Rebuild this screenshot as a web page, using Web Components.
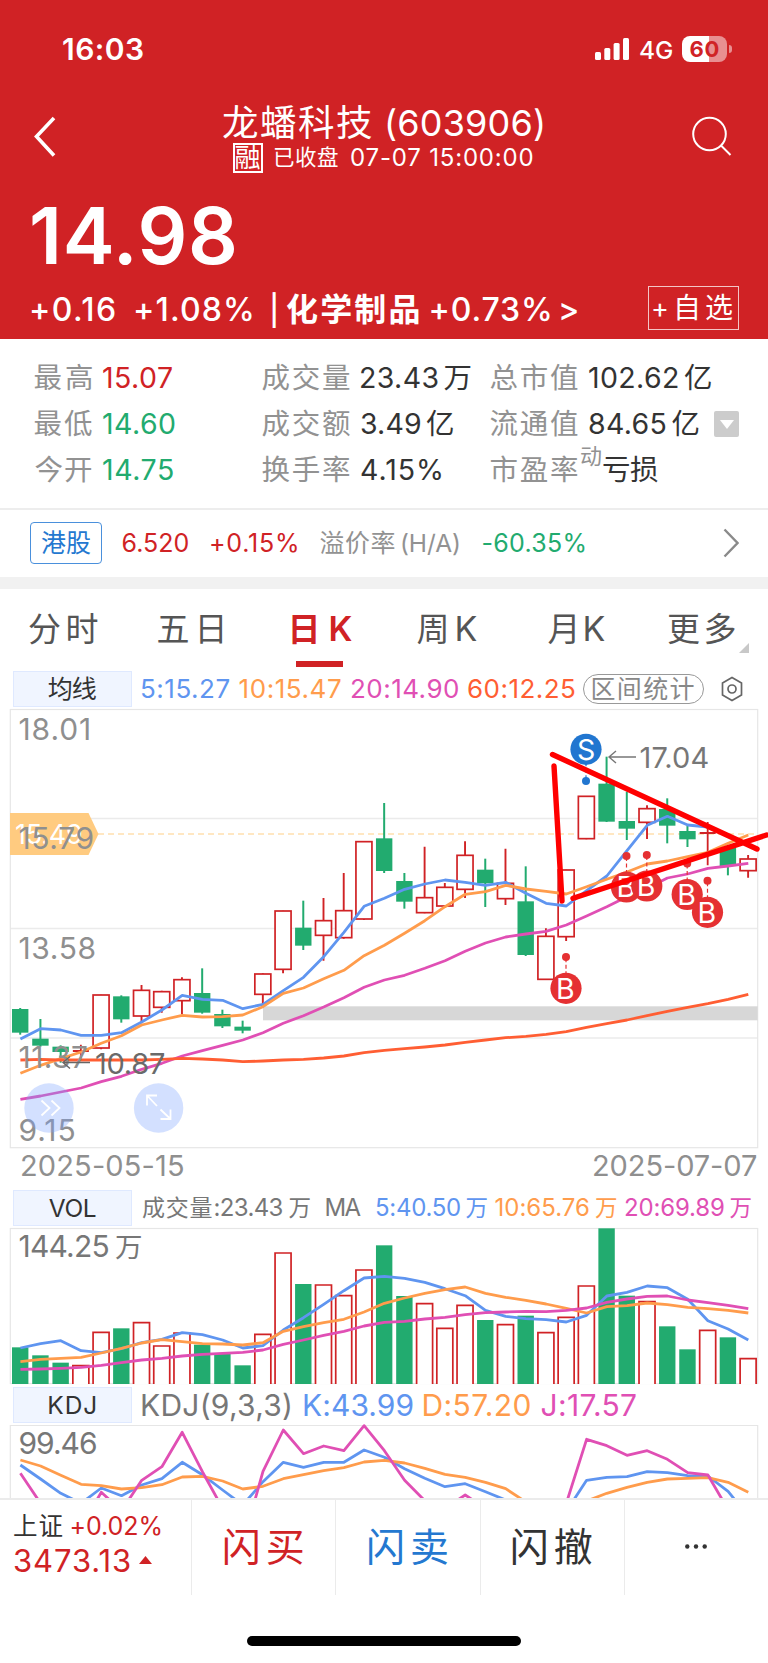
<!DOCTYPE html>
<html lang="zh-CN">
<head>
<meta charset="utf-8">
<title>龙蟠科技 (603906)</title>
<style>
  body {
    margin: 0;
    width: 768px;
    height: 1663px;
    overflow: hidden;
    background: #fff;
    font-family: Inter, "Noto Sans CJK SC", sans-serif;
    --up: #d02225;
    --down: #22ab6f;
    --blue: #5f95f0;
    --orange: #ff9c4c;
    --pink: #e04fb4;
    --deep: #ff5e33;
    --line: #ebebeb;
    --muted: #8f8f8f;
  }
</style>
</head>
<body>
<stock-page></stock-page>
<script>
const FONT = 'Inter, "Noto Sans CJK SC", sans-serif'
const pen = document.createElement('canvas').getContext('2d')

// letter spacing and left shift that make a string exactly w pixels wide
function fit(text, w, size, weight) {
  pen.font = `${weight} ${size}px ${FONT}`
  let m = pen.measureText(text)
  let ink = m.actualBoundingBoxLeft + m.actualBoundingBoxRight
  let gaps = [...text].length - 1
  return { space: gaps > 0 && w ? (w - ink) / gaps : 0, shift: m.actualBoundingBoxLeft, ink }
}

// <fit-text w="80" size="30" weight="600">
window.customElements.define('fit-text', class extends HTMLElement {
  constructor() {
    super()
    let shadow = this.attachShadow({ mode: 'open' });
    shadow.innerHTML = `
        <style>
          :host{
            display: block;
            flex: none;
          }
          span{
            display: block;
            white-space: nowrap;
            line-height: 1;
          }
        </style>
        <span><slot></slot></span>
        `
  }
  connectedCallback() {
    let size = +this.getAttribute('size')
    let weight = this.getAttribute('weight') || 400
    let w = +this.getAttribute('w')
    let f = fit(this.textContent, w, size, weight)
    let span = this.shadowRoot.querySelector('span')
    this.style.width = (w || f.ink) + 'px'
    span.style.fontSize = size + 'px'
    span.style.fontWeight = weight
    span.style.letterSpacing = f.space + 'px'
    span.style.marginLeft = f.shift + 'px'
  }
})

window.customElements.define('status-bar', class extends HTMLElement {
  constructor() {
    super()
    let shadow = this.attachShadow({ mode: 'open' });
    shadow.innerHTML = `
        <style>
          :host{
            display: flex;
            align-items: center;
            height: 98px;
            padding: 0 36px 0 63px;
            box-sizing: border-box;
          }
          .right{
            display: flex;
            align-items: center;
            margin-left: auto;
          }
          .battery{
            display: flex;
            align-items: center;
            justify-content: center;
            width: 45px;
            height: 26px;
            margin-left: 10px;
            border-radius: 8px;
            background: linear-gradient(90deg, #fff 27px, #e88f91 27px);
            color: var(--up);
          }
          .nub{
            width: 3px;
            height: 8px;
            margin-left: 2px;
            border-radius: 0 3px 3px 0;
            background: #e88f91;
          }
        </style>
        <fit-text w="80" size="30" weight="600">16:03</fit-text>
        <div class="right">
          <svg width="34" height="22" fill="#fff">
            <rect x="0" y="14" width="6" height="8" rx="1.5"/>
            <rect x="9.3" y="10" width="6" height="12" rx="1.5"/>
            <rect x="18.6" y="5" width="6" height="17" rx="1.5"/>
            <rect x="28" y="0" width="6" height="22" rx="1.5"/>
          </svg>
          <fit-text w="32" size="24.5" weight="500" style="margin:2px 0 0 11px">4G</fit-text>
          <div class="battery"><fit-text w="28" size="22" weight="700">60</fit-text></div>
          <div class="nub"></div>
        </div>
        `
  }
})

window.customElements.define('stock-header', class extends HTMLElement {
  constructor() {
    super()
    let shadow = this.attachShadow({ mode: 'open' });
    shadow.innerHTML = `
        <style>
          :host{
            display: block;
            height: 339px;
            background: var(--up);
            color: #fff;
          }
          nav{
            display: flex;
            height: 77px;
            padding: 0 36px 0 33px;
          }
          nav svg{
            margin-top: 17px;
          }
          .title{
            padding-top: 6px;
            margin: 0 auto 0 176px;
          }
          .name, .sub, .change{
            display: flex;
            align-items: center;
          }
          .name{
            height: 38px;
            margin-left: -10px;
          }
          .sub{
            height: 30px;
            margin-top: 1px;
          }
          .tag{
            display: flex;
            align-items: center;
            justify-content: center;
            width: 30px;
            height: 30px;
            box-sizing: border-box;
            border: 2px solid #fff;
          }
          .price{
            display: flex;
            align-items: center;
            height: 90px;
            padding: 16px 0 0 32px;
          }
          .change{
            height: 58px;
            padding: 0 29px 0 31px;
          }
          .add{
            display: flex;
            align-items: center;
            gap: 8px;
            height: 42px;
            padding: 0 5px 0 4px;
            margin: 0 0 4px auto;
            border: 1px solid #f3c5c6;
          }
        </style>
        <status-bar></status-bar>
        <nav>
          <svg width="24" height="44" fill="none" stroke="#fff" stroke-width="3.6"><path d="M21 3 3.5 21.5 21 40.5"/></svg>
          <div class="title">
            <div class="name">
              <fit-text w="149" size="36.5">龙蟠科技</fit-text>
              <fit-text w="156" size="36" style="margin-left:15px">(603906)</fit-text>
            </div>
            <div class="sub">
              <div class="tag"><fit-text w="25" size="26">融</fit-text></div>
              <fit-text w="64" size="21.5" style="margin-left:11px">已收盘</fit-text>
              <fit-text w="181.5" size="24" style="margin-left:13px">07-07 15:00:00</fit-text>
            </div>
          </div>
          <svg width="40" height="44" fill="none" stroke="#fff" stroke-width="2"><circle cx="17.5" cy="19" r="16.3"/><path d="M29 30.5 38.5 40"/></svg>
        </nav>
        <div class="price"><fit-text w="202" size="78" weight="600">14.98</fit-text></div>
        <div class="change">
          <fit-text w="84" size="32" weight="500">+0.16</fit-text>
          <fit-text w="117" size="32" weight="500" style="margin-left:20px">+1.08%</fit-text>
          <fit-text size="30" weight="500" style="margin-left:20px">|</fit-text>
          <fit-text w="132.5" size="32" weight="600" style="margin-left:10px">化学制品</fit-text>
          <fit-text w="119.5" size="32" weight="500" style="margin-left:12px">+0.73%</fit-text>
          <fit-text w="18" size="32" weight="500" style="margin-left:11px">&gt;</fit-text>
          <div class="add"><fit-text w="16" size="27">+</fit-text><fit-text w="56" size="28">自选</fit-text></div>
        </div>
        `
  }
})

window.customElements.define('quote-stats', class extends HTMLElement {
  constructor() {
    super()
    let shadow = this.attachShadow({ mode: 'open' });
    shadow.innerHTML = `
        <style>
          :host{
            display: grid;
            grid-template-columns: 228px 228px 1fr;
            grid-auto-rows: 46px;
            height: 153px;
            padding: 16px 29px 0 34.5px;
            border-bottom: 2px solid #ededed;
            color: #333;
          }
          div{
            display: flex;
            align-items: center;
          }
          .k{
            color: #929292;
            margin-right: 11px;
          }
          .u{
            margin-left: 6px;
          }
          .up{ color: var(--up); }
          .down{ color: var(--down); }
          sup{
            color: #929292;
            margin: 0 0 28px -8px;
            line-height: 0;
          }
          i{
            display: flex;
            align-items: center;
            justify-content: center;
            width: 25px;
            height: 26px;
            margin-left: auto;
            border-radius: 2px;
            background: #ccc;
          }
        </style>
        <div><fit-text class="k" w="57.5" size="28.5">最高</fit-text><fit-text class="up" w="69" size="28.5">15.07</fit-text></div>
        <div><fit-text class="k" w="87.5" size="28.5">成交量</fit-text><fit-text w="76.5" size="28.5">23.43</fit-text><fit-text class="u" w="27" size="28.5">万</fit-text></div>
        <div><fit-text class="k" w="87.5" size="28.5">总市值</fit-text><fit-text w="89" size="28.5">102.62</fit-text><fit-text class="u" w="27" size="28.5">亿</fit-text></div>
        <div><fit-text class="k" w="57.5" size="28.5">最低</fit-text><fit-text class="down" w="72" size="28.5">14.60</fit-text></div>
        <div><fit-text class="k" w="87.5" size="28.5">成交额</fit-text><fit-text w="59" size="28.5">3.49</fit-text><fit-text class="u" w="27" size="28.5">亿</fit-text></div>
        <div><fit-text class="k" w="87.5" size="28.5">流通值</fit-text><fit-text w="76.5" size="28.5">84.65</fit-text><fit-text class="u" w="27" size="28.5">亿</fit-text>
          <i><svg width="14" height="9" fill="#fff"><path d="M0 0H14L7 9Z"/></svg></i></div>
        <div><fit-text class="k" w="57.5" size="28.5">今开</fit-text><fit-text class="down" w="70" size="28.5">14.75</fit-text></div>
        <div><fit-text class="k" w="87.5" size="28.5">换手率</fit-text><fit-text w="80" size="28.5">4.15%</fit-text></div>
        <div><fit-text class="k" w="87.5" size="28.5">市盈率</fit-text><sup><fit-text w="22" size="22">动</fit-text></sup><fit-text w="55" size="28.5">亏损</fit-text></div>
        `
  }
})

window.customElements.define('hk-row', class extends HTMLElement {
  constructor() {
    super()
    let shadow = this.attachShadow({ mode: 'open' });
    shadow.innerHTML = `
        <style>
          :host{
            display: flex;
            align-items: center;
            height: 66px;
            padding: 0 29px 1px 30px;
            border-bottom: 12px solid #f1f1f1;
            color: var(--up);
          }
          .hk{
            display: flex;
            align-items: center;
            justify-content: center;
            width: 72px;
            height: 42px;
            box-sizing: border-box;
            border: 1.5px solid #4a90dc;
            border-radius: 4px;
            color: #2478d0;
          }
          svg{
            margin-left: auto;
          }
        </style>
        <div class="hk"><fit-text w="50" size="25">港股</fit-text></div>
        <fit-text w="66" size="25" style="margin-left:20.5px">6.520</fit-text>
        <fit-text w="86" size="25" style="margin-left:22.5px">+0.15%</fit-text>
        <fit-text w="75" size="25" style="margin-left:22.5px;color:#929292">溢价率</fit-text>
        <fit-text w="57" size="24.5" style="margin-left:7.5px;color:#929292">(H/A)</fit-text>
        <fit-text w="102" size="25" style="margin-left:23.5px;color:var(--down)">-60.35%</fit-text>
        <svg width="16" height="30" fill="none" stroke="#8a8a8a" stroke-width="2.4"><path d="M1.5 1.5 14.5 15 1.5 28.5"/></svg>
        `
  }
})

window.customElements.define('period-tabs', class extends HTMLElement {
  constructor() {
    super()
    let shadow = this.attachShadow({ mode: 'open' });
    shadow.innerHTML = `
        <style>
          :host{
            display: flex;
            height: 82px;
            padding-left: 29px;
            box-sizing: border-box;
            color: #555;
          }
          div{
            position: relative;
            display: flex;
            align-items: center;
            gap: 8px;
            height: 80px;
          }
          .on{
            color: var(--up);
          }
          .on:after {
            position: absolute;
            content: "";
            left: 3px;
            bottom: 2px;
            width: 47px;
            height: 6px;
            background: var(--up);
          }
          svg{
            align-self: flex-end;
            margin: 0 0 18px 3px;
          }
        </style>
        <div><fit-text w="68.5" size="33">分时</fit-text></div>
        <div style="margin-left:60px"><fit-text w="65" size="33">五日</fit-text></div>
        <div class="on" style="margin-left:70px"><fit-text size="33" w="25" weight="700">日</fit-text><fit-text w="21" size="34" weight="600" style="margin-left:5px">K</fit-text></div>
        <div style="margin-left:66px"><fit-text w="31" size="33">周</fit-text><fit-text w="20" size="34">K</fit-text></div>
        <div style="margin-left:71px"><fit-text w="25" size="33">月</fit-text><fit-text w="20" size="34" style="margin-left:4px">K</fit-text></div>
        <div style="margin-left:63.5px"><fit-text w="67.5" size="33">更多</fit-text></div>
        <svg width="10" height="10" fill="#c8c8c8"><path d="M10 0V10H0Z"/></svg>
        `
  }
})

window.customElements.define('indicator-row', class extends HTMLElement {
  constructor() {
    super()
    let shadow = this.attachShadow({ mode: 'open' });
    shadow.innerHTML = `
        <style>
          :host{
            display: flex;
            align-items: center;
            height: 36px;
            padding-left: 13px;
            color: #777;
          }
          .name{
            display: flex;
            align-items: center;
            justify-content: center;
            width: 118.5px;
            height: 36px;
            margin-right: 10.5px;
            box-sizing: border-box;
            border: 1.5px solid #dfe9ff;
            background: #f0f5ff;
            color: #333;
          }
        </style>
        <div class="name"><slot name="name"></slot></div>
        <slot></slot>
        `
  }
})

const N = 37
const X = i => 20 + i * 20.22

function label(text, x, y, w, size, fill) {
  let f = fit(text, w, size, 400)
  return `<text x="${x + f.shift}" y="${y}" font-size="${size}" letter-spacing="${f.space}" fill="${fill}">${text}</text>`
}

function curve(list, dy, color) {
  let pts = list.map((v, i) => `${(X(i) + 0.4).toFixed(1)},${(v / 3 - dy).toFixed(1)}`).join(' ')
  return `<polyline points="${pts}" fill="none" stroke="${color}" stroke-width="2.8" stroke-linejoin="round"/>`
}

const CHART_CSS = `
          :host{
            display: block;
          }
          svg{
            display: block;
          }
`

window.customElements.define('price-chart', class extends HTMLElement {
  constructor() {
    super()
    // type, high, body top, body bottom, low
    let candles = [
      'G 924 927 998 1004', 'G 957 1016 1037 1040', 'G 1036 1040 1056 1088', 'R 1034 1053 1055 1075',
      'R 884 885 1044 1048', 'G 886 889 958 968', 'R 855 871 948 970', 'R 872 875 922 938',
      'R 832 839 902 942', 'G 805 879 938 941', 'G 929 942 979 984', 'G 962 980 992 1000',
      'R 820 822 883 912', 'R 632 633 808 820', 'G 602 683 737 750', 'R 594 662 706 782',
      'R 519 632 713 716', 'R 424 425 657 660', 'G 309 415 513 519', 'G 519 543 605 626',
      'R 440 593 638 640', 'R 549 562 618 621', 'R 424 466 568 594', 'G 476 509 550 621',
      'R 446 550 596 615', 'G 499 604 765 768', 'R 685 709 838 840', 'R 509 510 710 723',
      'R 288 289 416 418', 'G 170 251 365 366', 'G 275 363 386 420', 'R 316 326 367 417',
      'G 295 327 377 430', 'G 378 393 418 441', 'R 366 399 401 496', 'G 440 444 498 526',
      'R 465 477 512 533'
    ].map((row, i) => {
      let [t, h, a, b, l] = row.split(' ').map((v, k) => k ? v / 3 - 7 : v)
      let x = X(i) + 0.2
      if (t === 'G') return `<path d="M${x} ${h}V${l}" stroke="var(--down)" stroke-width="2"/><rect x="${x - 8.2}" y="${a}" width="16.4" height="${b - a}" fill="var(--down)"/>`
      if (b - a < 2) return `<path d="M${x} ${h}V${l}M${x - 8} ${a}h16" stroke="var(--up)" stroke-width="1.8"/>`
      return `<path d="M${x} ${h}V${a}M${x} ${b}V${l}" stroke="var(--up)" stroke-width="1.9"/><rect x="${x - 8}" y="${a}" width="16" height="${b - a}" fill="#fff" stroke="var(--up)" stroke-width="1.7"/>`
    }).join('')

    let ma5 = [1017, 986, 990, 1006, 1006, 998, 966, 930, 886, 898, 901, 926, 913, 872, 832, 770, 697, 619, 595, 568, 552, 540, 547, 556, 547, 580, 610, 618, 572, 528, 452, 376, 349, 375, 381, 408, 435]
    let ma10 = [1120, 1096, 1076, 1056, 1030, 1007, 975, 960, 946, 951, 950, 945, 920, 880, 864, 836, 811, 767, 736, 700, 662, 620, 583, 575, 556, 567, 574, 582, 560, 538, 516, 492, 483, 470, 457, 430, 405]
    let ma20 = [1198, 1188, 1176, 1164, 1145, 1129, 1108, 1090, 1068, 1052, 1036, 1020, 998, 970, 947, 921, 893, 862, 840, 826, 805, 782, 754, 729, 711, 702, 694, 675, 648, 620, 590, 565, 534, 522, 505, 498, 490]
    let ma60 = [1080, 1078, 1080, 1080, 1080, 1080, 1080, 1078, 1075, 1077, 1080, 1085, 1083, 1080, 1078, 1074, 1068, 1058, 1051, 1046, 1041, 1035, 1027, 1020, 1013, 1009, 1003, 995, 982, 971, 960, 947, 934, 922, 911, 898, 883]

    let mark = (t, x, y, dot, color) => `
          <path d="M${x} ${y}V${dot}" stroke="${color}" stroke-width="1.2" stroke-dasharray="4 2.5"/>
          <circle cx="${x}" cy="${dot}" r="4" fill="${color}"/>
          <circle cx="${x}" cy="${y}" r="15.6" fill="${color}"/>
          ${label(t, x - 8, y + 10.4, 0, 28.5, '#fff')}`

    let shadow = this.attachShadow({ mode: 'open' });
    shadow.innerHTML = `
        <style>${CHART_CSS}
          .dates{
            display: flex;
            align-items: center;
            justify-content: space-between;
            height: 30px;
            padding: 0 11px 10px 22px;
            color: var(--muted);
          }
        </style>
        <svg width="768" height="443">
          <path d="M10.3 111.6H757.7M10.3 221.5H757.7M10.3 331H757.7" stroke="var(--line)" stroke-width="1.5"/>
          <rect x="10.3" y="2.5" width="747.4" height="438.2" fill="none" stroke="#e6e6e6" stroke-width="1.2"/>
          <path d="M98 127H757" stroke="#ffdfae" stroke-width="1.4" stroke-dasharray="6 4"/>
          <rect x="263" y="299.3" width="494.7" height="14" fill="#d7d7d7"/>
          ${candles}
          ${curve(ma5, 7, 'var(--blue)')}
          ${curve(ma10, 7, 'var(--orange)')}
          ${curve(ma20, 7, 'var(--pink)')}
          ${curve(ma60, 7, 'var(--deep)')}
          <path d="M10 106H88.5L98.5 127 88.5 148H10Z" fill="#ffcb80"/>
          ${label('15.49', 16, 137, 66, 27, '#fff')}
          ${label('18.01', 19.5, 32.5, 69.5, 30, 'var(--muted)')}
          ${label('15.79', 19.5, 142, 73, 30, 'var(--muted)')}
          ${label('13.58', 19.5, 252, 75, 30, 'var(--muted)')}
          ${label('11.37', 19.5, 361.3, 67.5, 30, 'var(--muted)')}
          ${label('9.15', 19.5, 433.7, 55, 30, 'var(--muted)')}
          <path d="M90 355.500H63M70 349.500L63 355.500L70 361.500" fill="none" stroke="#666" stroke-width="1.4"/>
          ${label('10.87', 96, 366.5, 69, 29, '#6a6a6a')}
          <path d="M636 50H609M616 44L609 50L616 56" fill="none" stroke="#777" stroke-width="1.4"/>
          ${label('17.04', 640.5, 61, 68, 29, '#777')}
          ${mark('S', 586, 42.3, 74, '#2176d0')}
          ${mark('B', 566, 281.3, 250, '#e53032')}
          ${mark('B', 626.5, 180, 149, '#e53032')}
          ${mark('B', 646.8, 179, 148, '#e53032')}
          ${mark('B', 687.2, 187.5, 156.5, '#e53032')}
          ${mark('B', 707.5, 205.3, 173.7, '#e53032')}
          <path d="M554 59 562 194M552.5 47.5 757 142M573 191.3 766.5 128" stroke="#f00" stroke-width="5.4" stroke-linecap="round"/>
          <g fill="rgba(120,162,255,.33)"><circle cx="49" cy="401" r="24.7"/><circle cx="158.6" cy="401" r="24.7"/></g>
          <path d="M41.5 393.5 49.5 401 41.5 408.5M51.5 393.5 59.5 401 51.5 408.5M157 399 147 388.5M147 398.5V388.5H157M160.5 402.5 170.5 412M170.5 402.5V412H160.5" fill="none" stroke="#fff" stroke-width="1.8"/>
        </svg>
        <div class="dates">
          <fit-text w="161" size="29">2025-05-15</fit-text>
          <fit-text w="163" size="29">2025-07-07</fit-text>
        </div>
        `
  }
})

window.customElements.define('volume-chart', class extends HTMLElement {
  constructor() {
    super()
    let bars = 'G502 G526 G548 R557 R457 G445 R428 R498 R459 G494 G522 G556 R463 R219 G312 R315 R347 R270 G196 G348 R371 R445 R376 G420 R434 G407 R458 R412 R318 G145 G347 R365 G439 G508 R451 G472 R536'
      .split(' ').map((b, i) => {
        let y = b.slice(1) / 3 - 46
        if (b[0] === 'G') return `<rect x="${X(i) - 8}" y="${y}" width="16.4" height="${158 - y}" fill="var(--down)"/>`
        return `<path d="M${X(i) - 7.8} 158V${y}h16V158" fill="#fff" stroke="var(--up)" stroke-width="1.7"/>`
      }).join('')
    let v5 = [504, 491, 482, 512, 518, 506, 488, 478, 458, 464, 480, 504, 497, 450, 413, 373, 332, 294, 289, 295, 307, 326, 347, 391, 409, 416, 419, 426, 406, 348, 337, 318, 323, 358, 422, 447, 480]
    let v10 = [545, 538, 535, 532, 519, 505, 489, 479, 485, 491, 492, 495, 488, 454, 440, 428, 418, 396, 370, 354, 340, 329, 321, 340, 352, 361, 372, 385, 399, 380, 377, 369, 374, 382, 386, 391, 399]
    let v20 = [568, 567, 565, 562, 556, 548, 540, 535, 528, 523, 520, 517, 510, 493, 480, 466, 454, 438, 427, 424, 417, 412, 404, 398, 396, 394, 395, 391, 384, 367, 357, 349, 348, 360, 368, 376, 386]
    let shadow = this.attachShadow({ mode: 'open' });
    shadow.innerHTML = `
        <style>${CHART_CSS}</style>
        <svg width="768" height="161">
          <rect x="10.3" y="2.5" width="747.4" height="155" fill="none" stroke="#e6e6e6" stroke-width="1.2"/>
          ${bars}
          ${curve(v5, 46, 'var(--blue)')}
          ${curve(v10, 46, 'var(--orange)')}
          ${curve(v20, 46, 'var(--pink)')}
          ${label('144.25', 19.5, 30.7, 89, 30, '#777')}
          ${label('万', 115, 31, 0, 27.5, '#777')}
        </svg>
        `
  }
})

window.customElements.define('kdj-chart', class extends HTMLElement {
  constructor() {
    super()
    let k = [855, 897, 940, 970, 924, 947, 915, 896, 847, 884, 930, 975, 905, 847, 862, 847, 847, 810, 832, 866, 895, 920, 911, 935, 960, 990, 1010, 994, 901, 892, 890, 875, 878, 887, 888, 934, 1010]
    let d = [840, 858, 886, 913, 917, 927, 923, 914, 891, 889, 903, 927, 919, 896, 884, 872, 863, 846, 841, 849, 865, 883, 892, 907, 926, 966, 990, 990, 963, 940, 922, 907, 897, 895, 893, 907, 937]
    let j = [880, 970, 1060, 1040, 937, 992, 901, 860, 757, 875, 985, 1090, 874, 750, 821, 798, 812, 737, 812, 901, 962, 985, 945, 985, 1060, 1100, 1100, 970, 778, 797, 826, 812, 838, 878, 885, 989, 1080]
    let shadow = this.attachShadow({ mode: 'open' });
    shadow.innerHTML = `
        <style>${CHART_CSS}</style>
        <svg width="768" height="75">
          <path d="M10.3 75V2.5H757.7V75" fill="none" stroke="#e6e6e6" stroke-width="1.2"/>
          ${label('99.46', 19.5, 30.5, 76.5, 30, '#777')}
          ${curve(k, 243, 'var(--blue)')}
          ${curve(d, 243, 'var(--orange)')}
          ${curve(j, 243, 'var(--pink)')}
        </svg>
        `
  }
})

window.customElements.define('trade-bar', class extends HTMLElement {
  constructor() {
    super()
    let shadow = this.attachShadow({ mode: 'open' });
    shadow.innerHTML = `
        <style>
          :host{
            display: block;
            border-top: 2px solid var(--line);
            background: #fff;
          }
          .bar{
            display: grid;
            grid-template-columns: 191px 144.3px 144.3px 144.3px 1fr;
            height: 95px;
            color: #333;
          }
          .bar > div{
            display: flex;
            align-items: center;
            justify-content: center;
            padding-bottom: 3px;
          }
          .bar > div + div{
            border-left: 1.5px solid var(--line);
          }
          .bar .index{
            flex-direction: column;
            align-items: flex-start;
            gap: 6px;
            padding: 0 0 6px 14px;
            color: var(--up);
          }
          .index p{
            display: flex;
            align-items: center;
            margin: 0;
          }
          .home{
            width: 274px;
            height: 10px;
            margin: 41px auto 0;
            border-radius: 5px;
            background: #000;
          }
        </style>
        <div class="bar">
          <div class="index">
            <p><fit-text w="48.5" size="24.5" style="color:#333">上证</fit-text><fit-text w="89" size="25" style="margin-left:9px">+0.02%</fit-text></p>
            <p><fit-text w="116" size="31">3473.13</fit-text><svg width="13" height="8" style="margin-left:9px" fill="#d02225"><path d="M6.5 0 13 8H0Z"/></svg></p>
          </div>
          <div style="color:var(--up)"><fit-text w="78" size="39">闪买</fit-text></div>
          <div style="color:#2478d0"><fit-text w="78" size="39">闪卖</fit-text></div>
          <div><fit-text w="79" size="39">闪撤</fit-text></div>
          <div><svg width="22" height="5" fill="#333"><circle cx="2.3" cy="2.5" r="2.2"/><circle cx="11" cy="2.5" r="2.2"/><circle cx="19.7" cy="2.5" r="2.2"/></svg></div>
        </div>
        <div class="home"></div>
        `
  }
})

window.customElements.define('stock-page', class extends HTMLElement {
  constructor() {
    super()
    let shadow = this.attachShadow({ mode: 'open' });
    shadow.innerHTML = `
        <style>
          :host{
            display: block;
          }
          .b{ color: var(--blue); }
          .o{ color: var(--orange); }
          .p{ color: var(--pink); }
          .d{ color: var(--deep); }
          .pill{
            display: flex;
            align-items: center;
            justify-content: center;
            width: 121px;
            height: 30px;
            margin: 0 17.5px 0 7.5px;
            box-sizing: border-box;
            border: 1.5px solid #999;
            border-radius: 15px;
            color: #888;
          }
        </style>
        <stock-header></stock-header>
        <quote-stats></quote-stats>
        <hk-row></hk-row>
        <period-tabs></period-tabs>
        <indicator-row>
          <fit-text slot="name" w="49" size="25">均线</fit-text>
          <fit-text class="b" w="87.5" size="26">5:15.27</fit-text>
          <fit-text class="o" w="101.5" size="26" style="margin-left:10px">10:15.47</fit-text>
          <fit-text class="p" w="107" size="26" style="margin-left:10px">20:14.90</fit-text>
          <fit-text class="d" w="107" size="26" style="margin-left:10px">60:12.25</fit-text>
          <div class="pill"><fit-text w="101" size="25">区间统计</fit-text></div>
          <svg width="22" height="26" fill="none" stroke="#666" stroke-width="1.7"><path d="M11 1.5 20.5 7V19L11 24.5 1.5 19V7Z"/><circle cx="11" cy="13" r="4"/></svg>
        </indicator-row>
        <price-chart></price-chart>
        <indicator-row>
          <fit-text slot="name" w="47" size="24.5">VOL</fit-text>
          <fit-text w="69.5" size="23">成交量</fit-text>
          <fit-text w="68" size="24" style="margin-left:3px">:23.43</fit-text>
          <fit-text w="21" size="22.5" style="margin-left:6px">万</fit-text>
          <fit-text w="34" size="24" style="margin-left:17px">MA</fit-text>
          <fit-text class="b" w="84" size="24" style="margin-left:15.5px">5:40.50</fit-text>
          <fit-text class="b" w="21" size="22.5" style="margin-left:5.5px">万</fit-text>
          <fit-text class="o" w="93.5" size="24" style="margin-left:9px">10:65.76</fit-text>
          <fit-text class="o" w="21" size="22.5" style="margin-left:6px">万</fit-text>
          <fit-text class="p" w="99" size="24" style="margin-left:9px">20:69.89</fit-text>
          <fit-text class="p" w="21" size="22.5" style="margin-left:5.5px">万</fit-text>
        </indicator-row>
        <volume-chart></volume-chart>
        <indicator-row>
          <fit-text slot="name" w="46" size="24.5">KDJ</fit-text>
          <fit-text w="148" size="30">KDJ(9,3,3)</fit-text>
          <fit-text class="b" w="108.5" size="30" style="margin-left:14px">K:43.99</fit-text>
          <fit-text class="o" w="107" size="30" style="margin-left:11px">D:57.20</fit-text>
          <fit-text class="p" w="94.5" size="30" style="margin-left:11px">J:17.57</fit-text>
        </indicator-row>
        <kdj-chart></kdj-chart>
        <trade-bar></trade-bar>
        `
  }
})
</script>
</body>
</html>
